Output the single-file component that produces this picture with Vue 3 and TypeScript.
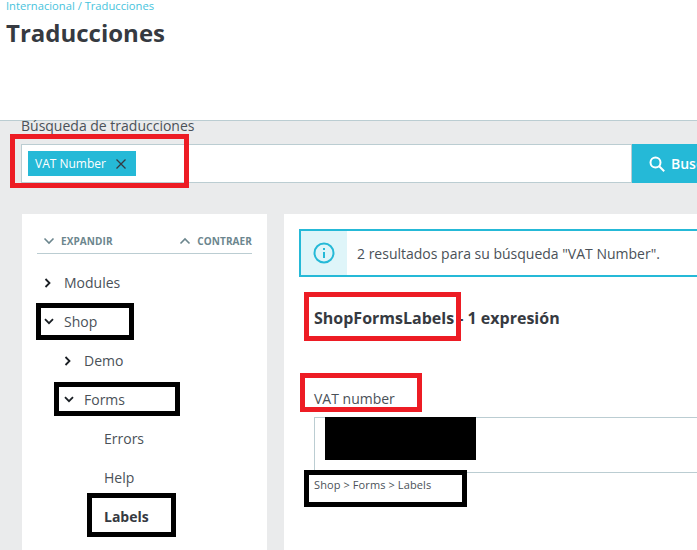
<script setup lang="ts">
interface TreeRow {
  label: string
  depth: number
  icon: 'right' | 'down' | 'none'
  bold?: boolean
}

const rows: TreeRow[] = [
  { label: 'Modules', depth: 0, icon: 'right' },
  { label: 'Shop', depth: 0, icon: 'down' },
  { label: 'Demo', depth: 1, icon: 'right' },
  { label: 'Forms', depth: 1, icon: 'down' },
  { label: 'Errors', depth: 2, icon: 'none' },
  { label: 'Help', depth: 2, icon: 'none' },
  { label: 'Labels', depth: 2, icon: 'none', bold: true },
]

const marks = [
  { kind: 'red', left: 10, top: 134, width: 179, height: 54 },
  { kind: 'red', left: 304, top: 292, width: 157, height: 49 },
  { kind: 'red', left: 300, top: 373, width: 122, height: 39 },
  { kind: 'black', left: 36, top: 303, width: 98, height: 37 },
  { kind: 'black', left: 54, top: 382, width: 126, height: 34 },
  { kind: 'black', left: 87, top: 493, width: 89, height: 44 },
  { kind: 'black', left: 304, top: 470, width: 163, height: 37 },
]
</script>

<template>
  <div class="page">
    <header class="head">
      <div class="crumbs">Internacional / Traducciones</div>
      <h1 class="title">Traducciones</h1>
    </header>

    <section class="search">
      <div class="search-label">Búsqueda de traducciones</div>
      <div class="search-row">
        <div class="search-input">
          <span class="tag">
            VAT Number
            <svg class="tag-x" width="12" height="12" viewBox="0 0 12 12" fill="none" stroke="#363a41" stroke-width="1.3">
              <path d="M1.5 1.5l9 9M10.5 1.5l-9 9" />
            </svg>
          </span>
        </div>
        <div class="search-btn">
          <svg width="16" height="16" viewBox="0 0 16 16" fill="none" stroke="#fff" stroke-width="2">
            <circle cx="6.5" cy="6.5" r="5" />
            <path d="M10.2 10.2l5 5" />
          </svg>
          <span>Buscar</span>
        </div>
      </div>
    </section>

    <div class="columns">
      <aside class="side">
        <div class="tools">
          <span class="tool">
            <svg width="12" height="8" viewBox="0 0 12 8" fill="none" stroke="#6c868e" stroke-width="1.6">
              <path d="M1.5 1.5l4.5 4.5 4.5-4.5" />
            </svg>
            EXPANDIR
          </span>
          <span class="tool">
            <svg width="12" height="8" viewBox="0 0 12 8" fill="none" stroke="#6c868e" stroke-width="1.6">
              <path d="M1.5 6.5l4.5-4.5 4.5 4.5" />
            </svg>
            CONTRAER
          </span>
        </div>
        <ul class="tree">
          <li v-for="row in rows" :key="row.label" class="row" :class="['depth-' + row.depth, { bold: row.bold }]">
            <span class="chev">
              <svg v-if="row.icon === 'right'" width="8" height="10" viewBox="0 0 8 10" fill="none" stroke="#1a1f24" stroke-width="1.8">
                <path d="M1.5 1l4 4-4 4" />
              </svg>
              <svg v-else-if="row.icon === 'down'" width="10" height="7" viewBox="0 0 10 7" fill="none" stroke="#1a1f24" stroke-width="1.8">
                <path d="M1 1.2l4 4 4-4" />
              </svg>
            </span>
            {{ row.label }}
          </li>
        </ul>
      </aside>

      <main class="main">
        <div class="alert">
          <div class="alert-icon">
            <svg width="22" height="22" viewBox="0 0 22 22" fill="none" stroke="#25b9d7" stroke-width="2">
              <circle cx="11" cy="11" r="9.5" />
              <path d="M11 10v6M11 6v2" />
            </svg>
          </div>
          <div class="alert-text">2 resultados para su búsqueda "VAT Number".</div>
        </div>
        <h2 class="domain">ShopFormsLabels - 1 expresión</h2>
        <div class="expr-label">VAT number</div>
        <div class="expr-box">
          <div class="redaction"></div>
        </div>
        <div class="expr-path">Shop &gt; Forms &gt; Labels</div>
      </main>
    </div>

    <div
      v-for="m in marks"
      :key="m.left + '-' + m.top"
      class="mark"
      :class="m.kind"
      :style="{ left: m.left + 'px', top: m.top + 'px', width: m.width + 'px', height: m.height + 'px' }"
    ></div>
  </div>
</template>

<style>
html, body { margin: 0; overflow: hidden; }
</style>

<style scoped>
.page {
  position: relative;
  width: 697px;
  height: 550px;
  overflow: hidden;
  background: #eaebec;
  font-family: "Open Sans", "Liberation Sans", sans-serif;
  color: #4a5158;
}
.head {
  box-sizing: border-box;
  height: 121px;
  background: #fff;
  border-bottom: 1px solid #bbcdd2;
  padding-left: 6px;
}
.crumbs {
  font-size: 11.2px;
  line-height: 11px;
  color: #25b9d7;
  opacity: 0.85;
  white-space: nowrap;
}
.title {
  margin: 9px 0 0;
  font-size: 24px;
  line-height: 26px;
  font-weight: 700;
  color: #363a41;
}
.search { padding-left: 21px; }
.search-label {
  font-size: 14px;
  line-height: 10px;
  height: 23px;
  white-space: nowrap;
}
.search-row { display: flex; width: 740px; height: 39px; }
.search-input {
  box-sizing: border-box;
  flex: 0 0 611px;
  background: #fff;
  border: 1px solid #bbcdd2;
  padding: 6px;
}
.tag {
  display: flex;
  align-items: center;
  width: 108px;
  height: 25px;
  box-sizing: border-box;
  padding-left: 7px;
  background: #25b9d7;
  color: #fff;
  font-size: 12px;
  white-space: nowrap;
}
.tag-x { margin-left: 9px; }
.search-btn {
  flex: 1;
  display: flex;
  align-items: center;
  gap: 6px;
  padding-left: 17px;
  background: #25b9d7;
  color: #fff;
  font-size: 14px;
  font-weight: 600;
}
.columns {
  display: flex;
  gap: 17px;
  padding: 31px 0 0 22px;
  width: 900px;
  height: 336px;
}
.side {
  flex: 0 0 245px;
  box-sizing: border-box;
  background: #fff;
  padding: 0 15px;
}
.tools {
  display: flex;
  justify-content: space-between;
  height: 40px;
  box-sizing: border-box;
  border-bottom: 1px solid #bbcdd2;
  padding: 21px 0 0 6px;
}
.tool {
  display: flex;
  align-items: center;
  gap: 6px;
  height: 12px;
  font-size: 10px;
  letter-spacing: 0.1px;
  font-weight: 700;
  color: #6c868e;
  white-space: nowrap;
}
.tree { list-style: none; margin: 9px 0 0; padding: 0; }
.row {
  display: flex;
  align-items: center;
  height: 39px;
  font-size: 14px;
}
.bold { font-weight: 700; color: #363a41; }
.chev {
  display: flex;
  justify-content: flex-start;
  align-items: center;
  width: 20px;
  margin-left: 7px;
}
.depth-1 { padding-left: 20px; }
.depth-2 { padding-left: 40px; }
.main {
  flex: 0 0 500px;
  box-sizing: border-box;
  background: #fff;
  padding: 15px;
}
.alert {
  display: flex;
  height: 48px;
  box-sizing: border-box;
  border: 2px solid #25b9d7;
}
.alert-icon {
  flex: 0 0 46px;
  display: flex;
  align-items: center;
  justify-content: center;
  background: #dff5f9;
}
.alert-text {
  display: flex;
  align-items: center;
  padding-left: 10px;
  font-size: 14px;
  white-space: nowrap;
}
.domain {
  margin: 27px 0 0 15px;
  font-size: 16px;
  line-height: 28px;
  font-weight: 700;
  color: #363a41;
  white-space: nowrap;
}
.expr-label {
  margin: 57px 0 0 15px;
  font-size: 14px;
  line-height: 20px;
}
.expr-box {
  box-sizing: border-box;
  margin: 8px 0 0 15px;
  height: 56px;
  border: 1px solid #bbcdd2;
  border-right: none;
  padding-left: 10px;
}
.redaction { width: 151px; height: 43px; background: #000; margin-top: -1px; }
.expr-path {
  margin: 4px 0 0 15px;
  font-size: 11px;
  letter-spacing: 0.1px;
  line-height: 16px;
  white-space: nowrap;
}
.mark { position: absolute; box-sizing: border-box; pointer-events: none; }
.mark.red { border: 5px solid #ed1c24; }
.mark.black { border: 5px solid #000; }
</style>
